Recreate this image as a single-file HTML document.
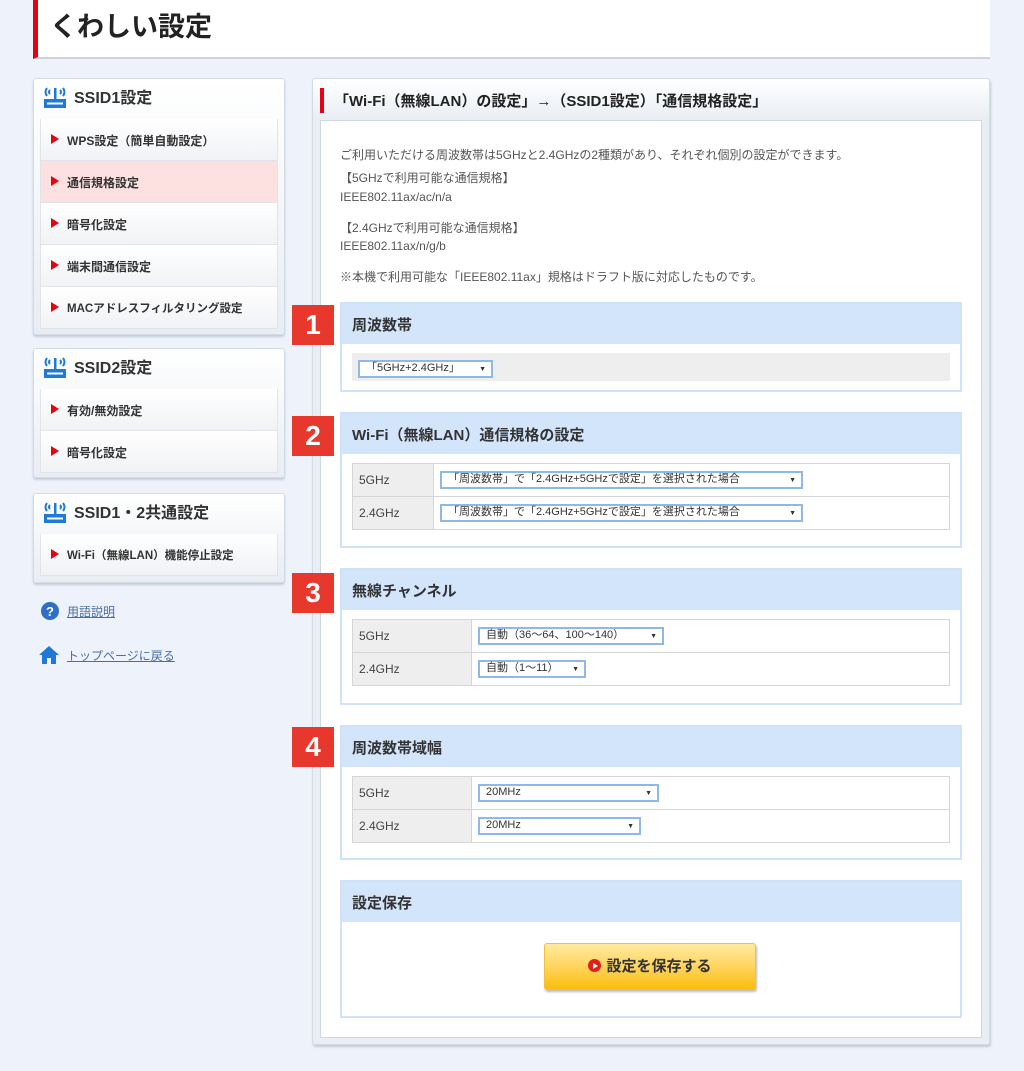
<!DOCTYPE html>
<html><head><meta charset="utf-8"><style>
*{margin:0;padding:0;box-sizing:border-box}
body{width:1024px;height:1071px;background:#eef3fb;font-family:"Liberation Sans","Noto Sans CJK JP",sans-serif;position:relative;overflow:hidden;color:#333}
.a{position:absolute}
.hdr{left:33px;top:0;width:957px;height:59px;background:#fff;border-left:5px solid #e60012;border-bottom:2px solid #ccd3dc}
.hdr span{position:absolute;left:12px;top:5px;font-size:27px;font-weight:bold;color:#222}
.sb{left:33px;width:252px;background:linear-gradient(#fff,#e8edf3);border:1px solid #d3dbe4;border-radius:3px;box-shadow:0 2px 2px #c3ccd6}
.sbh{height:40px;font-size:16px;font-weight:bold;padding:5px 0 0 40px;color:#333;position:relative}
.ico{position:absolute;left:8px;top:6px}
.it{margin:0 6px;height:42px;border:1px solid #dfe4ea;border-top:none;background:linear-gradient(#fff,#f0f2f5);font-size:12px;font-weight:bold;padding:13px 0 0 26px;position:relative;color:#333}
.it:first-of-type{border-top:1px solid #dfe4ea}
.it:before{content:"";position:absolute;left:10px;top:15px;border-left:8px solid #e60012;border-top:5px solid transparent;border-bottom:5px solid transparent}
.it.on{background:#fde1e1}
.lk{left:40px;font-size:12px;color:#4a6da3;text-decoration:underline;padding-left:27px}
.main{left:312px;top:78px;width:678px;height:967px;background:linear-gradient(#fff,#e9eef4 40px,#e9eef4);border:1px solid #d3dbe4;border-radius:3px;box-shadow:1px 2px 2px #c0cad5}
.inner{left:320px;top:120px;width:662px;height:918px;background:#fff;border:1px solid #d0d8e2}
.txt{left:340px;font-size:12px;color:#555}
.sec{left:340px;width:622px;border:2px solid #cfe2fa;background:#fff}
.sh{height:40px;background:#d3e5fb;font-size:15px;font-weight:bold;padding:10px 0 0 10px;color:#333}
.bd{left:292px;width:42px;height:40px;background:#e8372c;color:#fff;font-size:28px;font-weight:bold;text-align:center;line-height:40px}
table{position:absolute;border-collapse:collapse;font-size:12px;color:#444}
td{border:1px solid #d6d6d6;height:33px;padding:0 0 0 6px}
td.l{background:#eeeeee}
.sel{display:inline-block;height:18px;border:2px solid #8fb8e8;font-size:11px;line-height:13px;padding-left:6px;position:relative;background:#fff;color:#333}
.sel:after{content:"▼";position:absolute;right:5px;top:1px;font-size:7px}
</style></head><body>
<div class="a hdr"><span>くわしい設定</span></div>

<div class="a sb" style="top:78px;height:257px">
 <div class="sbh"><svg class="ico" width="26" height="24" viewBox="0 0 26 24"><path d="M5 3q-3 4 0 8M8 5q-2 2 0 4M21 3q3 4 0 8M18 5q2 2 0 4" stroke="#1e7ad6" stroke-width="2" fill="none"/><rect x="12" y="3" width="2.5" height="12" fill="#1e7ad6"/><rect x="2" y="14" width="22" height="9" fill="#1e7ad6"/><rect x="5" y="17.5" width="16" height="2" fill="#fff"/></svg>SSID1設定</div>
 <div class="it">WPS設定（簡単自動設定）</div>
 <div class="it on">通信規格設定</div>
 <div class="it">暗号化設定</div>
 <div class="it">端末間通信設定</div>
 <div class="it" style="padding-left:26px;font-size:11.5px">MACアドレスフィルタリング設定</div>
</div>
<div class="a sb" style="top:348px;height:130px">
 <div class="sbh"><svg class="ico" width="26" height="24" viewBox="0 0 26 24"><path d="M5 3q-3 4 0 8M8 5q-2 2 0 4M21 3q3 4 0 8M18 5q2 2 0 4" stroke="#1e7ad6" stroke-width="2" fill="none"/><rect x="12" y="3" width="2.5" height="12" fill="#1e7ad6"/><rect x="2" y="14" width="22" height="9" fill="#1e7ad6"/><rect x="5" y="17.5" width="16" height="2" fill="#fff"/></svg>SSID2設定</div>
 <div class="it">有効/無効設定</div>
 <div class="it">暗号化設定</div>
</div>
<div class="a sb" style="top:493px;height:90px">
 <div class="sbh"><svg class="ico" width="26" height="24" viewBox="0 0 26 24"><path d="M5 3q-3 4 0 8M8 5q-2 2 0 4M21 3q3 4 0 8M18 5q2 2 0 4" stroke="#1e7ad6" stroke-width="2" fill="none"/><rect x="12" y="3" width="2.5" height="12" fill="#1e7ad6"/><rect x="2" y="14" width="22" height="9" fill="#1e7ad6"/><rect x="5" y="17.5" width="16" height="2" fill="#fff"/></svg>SSID1・2共通設定</div>
 <div class="it" style="font-size:11.5px">Wi-Fi（無線LAN）機能停止設定</div>
</div>
<div class="a lk" style="top:603px"><svg class="a" style="left:0;top:-2px" width="20" height="20"><circle cx="10" cy="10" r="9" fill="#2f6fc4"/><text x="10" y="15" font-size="13" font-weight="bold" fill="#fff" text-anchor="middle" font-family="Liberation Sans">?</text></svg>用語説明</div>
<div class="a lk" style="top:647px"><svg class="a" style="left:-2px;top:-3px" width="22" height="22" viewBox="0 0 22 22"><path d="M11 2L1 11h3v9h5v-6h4v6h5v-9h3z" fill="#1e7ad6"/></svg>トップページに戻る</div>

<div class="a main"></div>
<div class="a" style="left:320px;top:88px;width:4px;height:25px;background:#e60012"></div>
<div class="a" style="left:334px;top:90px;font-size:15px;font-weight:bold;color:#222">「Wi-Fi（無線LAN）の設定」→（SSID1設定）「通信規格設定」</div>
<div class="a inner"></div>
<div class="a txt" style="top:146px">ご利用いただける周波数帯は5GHzと2.4GHzの2種類があり、それぞれ個別の設定ができます。</div>
<div class="a txt" style="top:169px">【5GHzで利用可能な通信規格】</div>
<div class="a txt" style="top:190px">IEEE802.11ax/ac/n/a</div>
<div class="a txt" style="top:219px">【2.4GHzで利用可能な通信規格】</div>
<div class="a txt" style="top:239px">IEEE802.11ax/n/g/b</div>
<div class="a txt" style="top:268px">※本機で利用可能な「IEEE802.11ax」規格はドラフト版に対応したものです。</div>

<div class="a sec" style="top:302px;height:90px"><div class="sh">周波数帯</div>
 <div class="a" style="left:10px;top:49px;width:598px;height:28px;background:#eee;padding:5px 0 0 6px"><span class="sel" style="width:135px">「5GHz+2.4GHz」</span></div></div>
<div class="a bd" style="top:305px">1</div>

<div class="a sec" style="top:412px;height:136px"><div class="sh">Wi-Fi（無線LAN）通信規格の設定</div>
 <table style="left:10px;top:49px;width:598px"><tr><td class="l" style="width:81px">5GHz</td><td><span class="sel" style="width:363px">「周波数帯」で「2.4GHz+5GHzで設定」を選択された場合</span></td></tr><tr><td class="l">2.4GHz</td><td><span class="sel" style="width:363px">「周波数帯」で「2.4GHz+5GHzで設定」を選択された場合</span></td></tr></table></div>
<div class="a bd" style="top:416px">2</div>

<div class="a sec" style="top:568px;height:137px"><div class="sh">無線チャンネル</div>
 <table style="left:10px;top:49px;width:598px"><tr><td class="l" style="width:119px">5GHz</td><td><span class="sel" style="width:186px">自動（36～64、100～140）</span></td></tr><tr><td class="l">2.4GHz</td><td><span class="sel" style="width:108px">自動（1～11）</span></td></tr></table></div>
<div class="a bd" style="top:573px">3</div>

<div class="a sec" style="top:725px;height:135px"><div class="sh">周波数帯域幅</div>
 <table style="left:10px;top:49px;width:598px"><tr><td class="l" style="width:119px">5GHz</td><td><span class="sel" style="width:181px">20MHz</span></td></tr><tr><td class="l">2.4GHz</td><td><span class="sel" style="width:163px">20MHz</span></td></tr></table></div>
<div class="a bd" style="top:727px">4</div>

<div class="a sec" style="top:880px;height:138px"><div class="sh">設定保存</div></div>
<div class="a" style="left:544px;top:943px;width:212px;height:47px;border-radius:3px;background:linear-gradient(#ffeaa0,#ffd766 45%,#fbbd0a);border:1px solid #f0c040;box-shadow:1px 2px 2px #bbb;text-align:center;font-size:15px;font-weight:bold;color:#333;line-height:45px"><span style="display:inline-block;width:13px;height:13px;border-radius:50%;background:#e0201a;vertical-align:-1px;margin-right:5px;position:relative"><span style="position:absolute;left:5px;top:3.5px;border-left:5px solid #fff;border-top:3px solid transparent;border-bottom:3px solid transparent"></span></span>設定を保存する</div>
</body></html>
